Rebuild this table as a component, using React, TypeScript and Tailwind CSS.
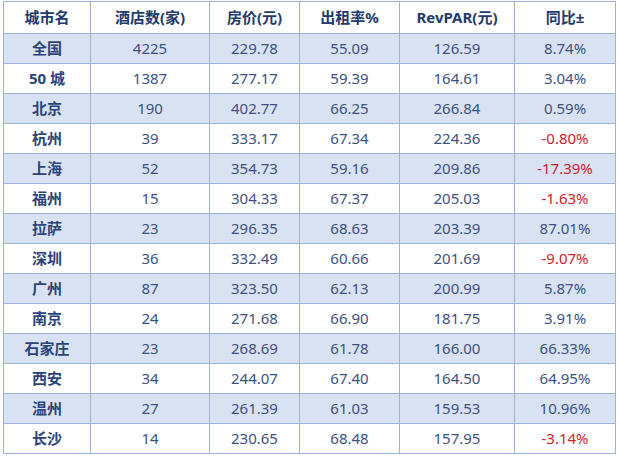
const rows: [string, string, string, string, string, string][] = [
  ["全国", "4225", "229.78", "55.09", "126.59", "8.74%"],
  ["50 城", "1387", "277.17", "59.39", "164.61", "3.04%"],
  ["北京", "190", "402.77", "66.25", "266.84", "0.59%"],
  ["杭州", "39", "333.17", "67.34", "224.36", "-0.80%"],
  ["上海", "52", "354.73", "59.16", "209.86", "-17.39%"],
  ["福州", "15", "304.33", "67.37", "205.03", "-1.63%"],
  ["拉萨", "23", "296.35", "68.63", "203.39", "87.01%"],
  ["深圳", "36", "332.49", "60.66", "201.69", "-9.07%"],
  ["广州", "87", "323.50", "62.13", "200.99", "5.87%"],
  ["南京", "24", "271.68", "66.90", "181.75", "3.91%"],
  ["石家庄", "23", "268.69", "61.78", "166.00", "66.33%"],
  ["西安", "34", "244.07", "67.40", "164.50", "64.95%"],
  ["温州", "27", "261.39", "61.03", "159.53", "10.96%"],
  ["长沙", "14", "230.65", "68.48", "157.95", "-3.14%"],
];

const headers = ["城市名", "酒店数(家)", "房价(元)", "出租率%", "RevPAR(元)", "同比±"];

export default function App() {
  return (
    <div className="w-[619px] h-[456px] overflow-hidden bg-white pl-[3px] pt-[1px] font-['Noto_Sans','Noto_Sans_CJK_SC',sans-serif]">
      <table className="table-fixed border-collapse w-[613px] text-[15px]">
        <colgroup>
          <col className="w-[87px]" />
          <col className="w-[119px]" />
          <col className="w-[90px]" />
          <col className="w-[100px]" />
          <col className="w-[115px]" />
          <col className="w-[101px]" />
        </colgroup>
        <thead>
          <tr className="h-[32px] bg-white">
            {headers.map((h) => (
              <th key={h} className="border border-[#9db3d8] text-center font-bold text-[#1f3a6e] leading-none p-0">
                {h}
              </th>
            ))}
          </tr>
        </thead>
        <tbody>
          {rows.map((r, i) => (
            <tr key={r[0]} className={i % 2 === 0 ? "h-[30px] bg-[#d9e2f3]" : "h-[30px] bg-white"}>
              {r.map((c, j) => (
                <td
                  key={j}
                  className={
                    j === 0
                      ? "border border-[#9db3d8] text-center font-bold text-[#2b4479] leading-none p-0"
                      : j === 5 && c.startsWith("-")
                      ? "border border-[#9db3d8] text-center text-[#d0222a] leading-none p-0"
                      : "border border-[#9db3d8] text-center text-[#3b5283] leading-none p-0"
                  }
                >
                  {c}
                </td>
              ))}
            </tr>
          ))}
        </tbody>
      </table>
    </div>
  );
}
